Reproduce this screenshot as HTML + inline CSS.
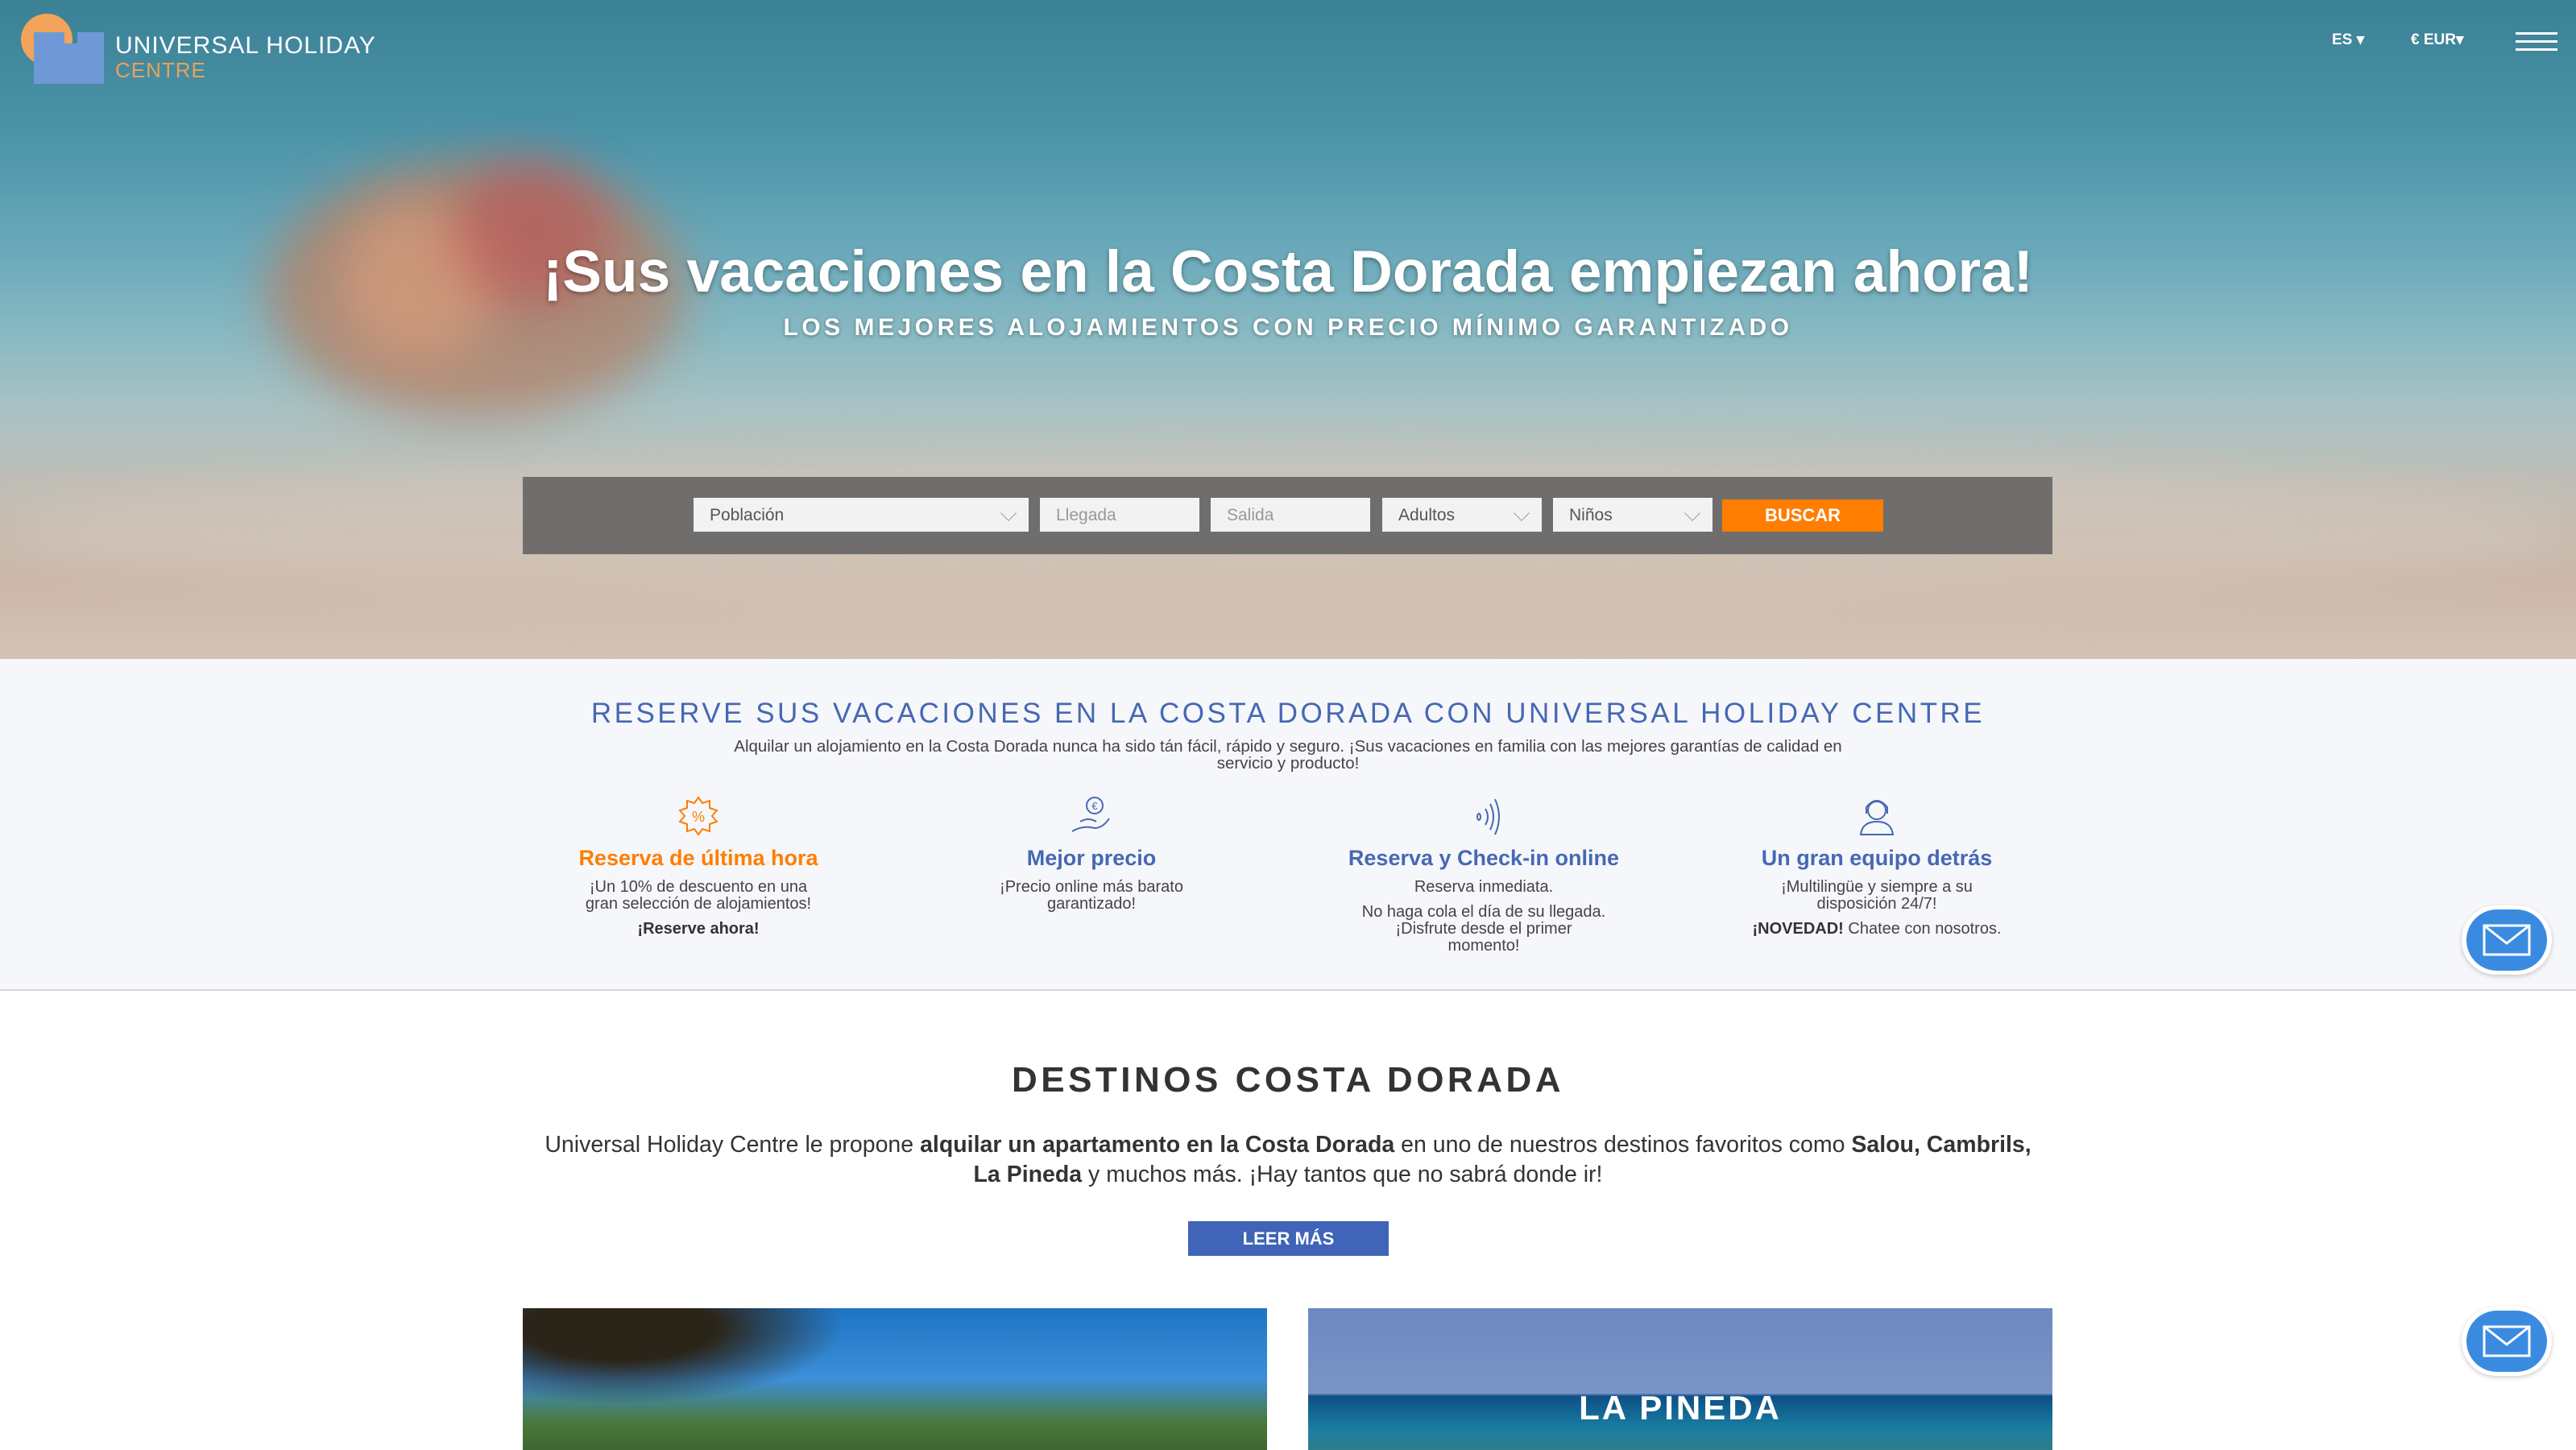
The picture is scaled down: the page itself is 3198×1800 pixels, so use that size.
<!DOCTYPE html>
<html><head><meta charset="utf-8"><style>
*{margin:0;padding:0;box-sizing:border-box}
body{width:3198px;height:1800px;overflow:hidden;font-family:"Liberation Sans",sans-serif;background:#fff;position:relative}
.hero{position:absolute;left:0;top:0;width:3198px;height:818px;
background:linear-gradient(180deg,#3b8196 0%,#4b93a8 20%,#6aa9ba 38%,#86b8c2 50%,#a9c2c4 62%,#c2bcb3 75%,#cbb7a8 88%,#d4c3b6 100%);overflow:hidden}
.blob{position:absolute;border-radius:50%;filter:blur(30px)}
.abs{position:absolute}
.logo-t{position:absolute;left:143px;top:40px;color:#fff;font-size:30px;letter-spacing:1px}
.logo-c{position:absolute;left:143px;top:72px;color:#e8a25a;font-size:26px;letter-spacing:1px}
.nav{position:absolute;top:38px;color:#fff;font-size:19px;font-weight:bold}
h1{position:absolute;left:0;width:3198px;top:296px;text-align:center;color:#fff;font-size:73px;font-weight:bold;text-shadow:0 2px 6px rgba(0,0,0,.4)}
.sub{position:absolute;left:0;width:3198px;top:390px;text-align:center;color:#fff;font-size:30px;font-weight:bold;letter-spacing:4.5px;text-shadow:0 1px 4px rgba(0,0,0,.4)}
.bar{position:absolute;left:649px;top:592px;width:1899px;height:96px;background:rgba(95,95,95,.85)}
.f{position:absolute;top:618px;height:42px;background:#f2f2f2;color:#555;font-size:21px;padding:10px 20px}
.f.ph{color:#999}
.chev{position:absolute;right:18px;top:12px;width:14px;height:14px;border-right:1.5px solid #999;border-bottom:1.5px solid #999;transform:rotate(45deg)}
.btn{position:absolute;left:2138px;top:620px;width:200px;height:40px;background:#ff7d00;color:#fff;font-weight:bold;font-size:22px;text-align:center;line-height:40px}
.sec{position:absolute;left:0;top:818px;width:3198px;height:412px;background:#f6f7fa;border-bottom:2px solid #d8d8d8}
.h2{position:absolute;left:0;width:3198px;top:866px;text-align:center;color:#4668b4;font-size:35px;letter-spacing:3.5px}
.p{position:absolute;left:875px;width:1448px;top:916px;text-align:center;color:#444;font-size:20.5px;line-height:21px}
.col{position:absolute;top:988px;width:440px;text-align:center}
.col svg{display:block;margin:0 auto}
.col .t{font-size:27px;font-weight:bold;color:#4668b4;margin-top:12px}
.col .d{font-size:20px;color:#444;line-height:21px;margin-top:10px}
.mail{position:absolute;width:112px;height:86px;border-radius:43px;background:#fff;box-shadow:0 2px 6px rgba(0,0,0,.2)}
.mail div{position:absolute;left:6px;top:5px;width:100px;height:76px;border-radius:38px;background:#3a8be0}
.h3{position:absolute;left:0;width:3198px;top:1316px;text-align:center;color:#333;font-size:44px;font-weight:bold;letter-spacing:4.5px}
.p2{position:absolute;left:640px;width:1918px;top:1403px;text-align:center;color:#333;font-size:28.5px;line-height:37px}
.leer{position:absolute;left:1475px;top:1516px;width:249px;height:43px;background:#3f64b8;color:#fff;font-weight:bold;font-size:22px;text-align:center;line-height:43px}
</style></head><body>
<div class="hero">
 <div class="blob" style="left:330px;top:200px;width:520px;height:320px;background:#b77f63;opacity:.75"></div>
 <div class="blob" style="left:420px;top:250px;width:200px;height:200px;background:#d49a7a;opacity:.8"></div>
 <div class="blob" style="left:560px;top:200px;width:200px;height:180px;background:#c4474c;opacity:.5"></div>
 <div class="blob" style="left:0;top:560px;width:3198px;height:200px;background:#dcd0c6;opacity:.4"></div>
 <svg class="abs" style="left:18px;top:14px" width="116" height="90" viewBox="0 0 116 90">
  <circle cx="40" cy="35" r="32" fill="#f4a35a"/>
  <path d="M24 26 H62 V40 H78 V26 H111 V95 H24 Z" fill="#6f99d6"/>
 </svg>
 <div class="logo-t">UNIVERSAL HOLIDAY</div>
 <div class="logo-c">CENTRE</div>
 <div class="nav" style="left:2895px">ES ▾</div>
 <div class="nav" style="left:2993px">€ EUR▾</div>
 <div class="abs" style="left:3123px;top:40px;width:52px;height:3px;background:#fff;box-shadow:0 10px 0 #fff,0 20px 0 #fff"></div>
 <h1>¡Sus vacaciones en la Costa Dorada empiezan ahora!</h1>
 <div class="sub">LOS MEJORES ALOJAMIENTOS CON PRECIO MÍNIMO GARANTIZADO</div>
 <div class="bar"></div>
 <div class="f" style="left:861px;width:416px">Población<span class="chev"></span></div>
 <div class="f ph" style="left:1291px;width:198px">Llegada</div>
 <div class="f ph" style="left:1503px;width:198px">Salida</div>
 <div class="f" style="left:1716px;width:198px">Adultos<span class="chev"></span></div>
 <div class="f" style="left:1928px;width:198px">Niños<span class="chev"></span></div>
 <div class="btn">BUSCAR</div>
</div>
<div class="sec"></div>
<div class="h2">RESERVE SUS VACACIONES EN LA COSTA DORADA CON UNIVERSAL HOLIDAY CENTRE</div>
<div class="p">Alquilar un alojamiento en la Costa Dorada nunca ha sido tán fácil, rápido y seguro. ¡Sus vacaciones en familia con las mejores garantías de calidad en servicio y producto!</div>
<div class="col" style="left:647px">
 <svg width="60" height="50" viewBox="0 0 60 50"><path d="M30 2 L35 9 L44 6 L44 15 L53 18 L47 25 L53 32 L44 35 L44 44 L35 41 L30 48 L25 41 L16 44 L16 35 L7 32 L13 25 L7 18 L16 15 L16 6 L25 9 Z" fill="none" stroke="#ff7d00" stroke-width="2"/><text x="30" y="32" font-size="18" fill="#ff7d00" text-anchor="middle" font-family="Liberation Sans">%</text></svg>
 <div class="t" style="color:#ff7d00">Reserva de última hora</div>
 <div class="d">¡Un 10% de descuento en una<br>gran selección de alojamientos!</div>
 <div class="d" style="font-weight:bold;color:#333">¡Reserve ahora!</div>
</div>
<div class="col" style="left:1135px">
 <svg width="60" height="50" viewBox="0 0 60 50"><circle cx="34" cy="12" r="10" fill="none" stroke="#4668b4" stroke-width="2"/><text x="34" y="17" font-size="13" fill="#4668b4" text-anchor="middle">€</text><path d="M6 44 Q20 36 34 40 Q44 40 52 28 M16 32 Q26 26 36 32" fill="none" stroke="#4668b4" stroke-width="2"/></svg>
 <div class="t">Mejor precio</div>
 <div class="d">¡Precio online más barato<br>garantizado!</div>
</div>
<div class="col" style="left:1622px">
 <svg width="60" height="50" viewBox="0 0 60 50"><ellipse cx="24" cy="26" rx="2" ry="4" fill="none" stroke="#4668b4" stroke-width="2"/><path d="M32 16 Q38 26 32 36 M38 10 Q46 26 38 42 M44 4 Q54 26 44 48" fill="none" stroke="#4668b4" stroke-width="2"/></svg>
 <div class="t">Reserva y Check-in online</div>
 <div class="d">Reserva inmediata.</div>
 <div class="d">No haga cola el día de su llegada.<br>¡Disfrute desde el primer<br>momento!</div>
</div>
<div class="col" style="left:2110px">
 <svg width="60" height="50" viewBox="0 0 60 50"><circle cx="30" cy="18" r="11" fill="none" stroke="#4668b4" stroke-width="2"/><path d="M17 22 V14 Q30 -2 43 14 V22 M10 48 Q12 32 30 32 Q48 32 50 48 Z" fill="none" stroke="#4668b4" stroke-width="2"/></svg>
 <div class="t">Un gran equipo detrás</div>
 <div class="d">¡Multilingüe y siempre a su<br>disposición 24/7!</div>
 <div class="d"><b style="color:#333">¡NOVEDAD!</b> Chatee con nosotros.</div>
</div>
<div class="mail" style="left:3056px;top:1124px"><div><svg width="100" height="76" viewBox="0 0 100 76"><rect x="22" y="20" width="56" height="36" fill="none" stroke="#fff" stroke-width="3"/><path d="M22 20 L50 42 L78 20" fill="none" stroke="#fff" stroke-width="3"/></svg></div></div>
<div class="mail" style="left:3056px;top:1622px"><div><svg width="100" height="76" viewBox="0 0 100 76"><rect x="22" y="20" width="56" height="36" fill="none" stroke="#fff" stroke-width="3"/><path d="M22 20 L50 42 L78 20" fill="none" stroke="#fff" stroke-width="3"/></svg></div></div>
<div class="h3">DESTINOS COSTA DORADA</div>
<div class="p2">Universal Holiday Centre le propone <b>alquilar un apartamento en la Costa Dorada</b> en uno de nuestros destinos favoritos como <b>Salou, Cambrils,<br>La Pineda</b> y muchos más. ¡Hay tantos que no sabrá donde ir!</div>
<div class="leer">LEER MÁS</div>
<div class="abs" style="left:649px;top:1624px;width:924px;height:176px;background:linear-gradient(180deg,#1e74c4 0%,#3d8fd8 50%,#4a7a3c 80%,#3f6630 100%)">
 <div class="abs" style="left:0;top:0;width:400px;height:120px;background:radial-gradient(ellipse at 30% 20%,#2b2418 30%,transparent 70%)"></div>
</div>
<div class="abs" style="left:1624px;top:1624px;width:924px;height:176px;background:linear-gradient(180deg,#6c89c0 0%,#7b94c6 60%,#0d4f86 62%,#1a7ea0 85%,#2e7e8a 100%)">
 <div style="position:absolute;left:0;width:924px;top:100px;text-align:center;color:#fff;font-weight:bold;font-size:42px;letter-spacing:3px">LA PINEDA</div>
</div>
</body></html>
